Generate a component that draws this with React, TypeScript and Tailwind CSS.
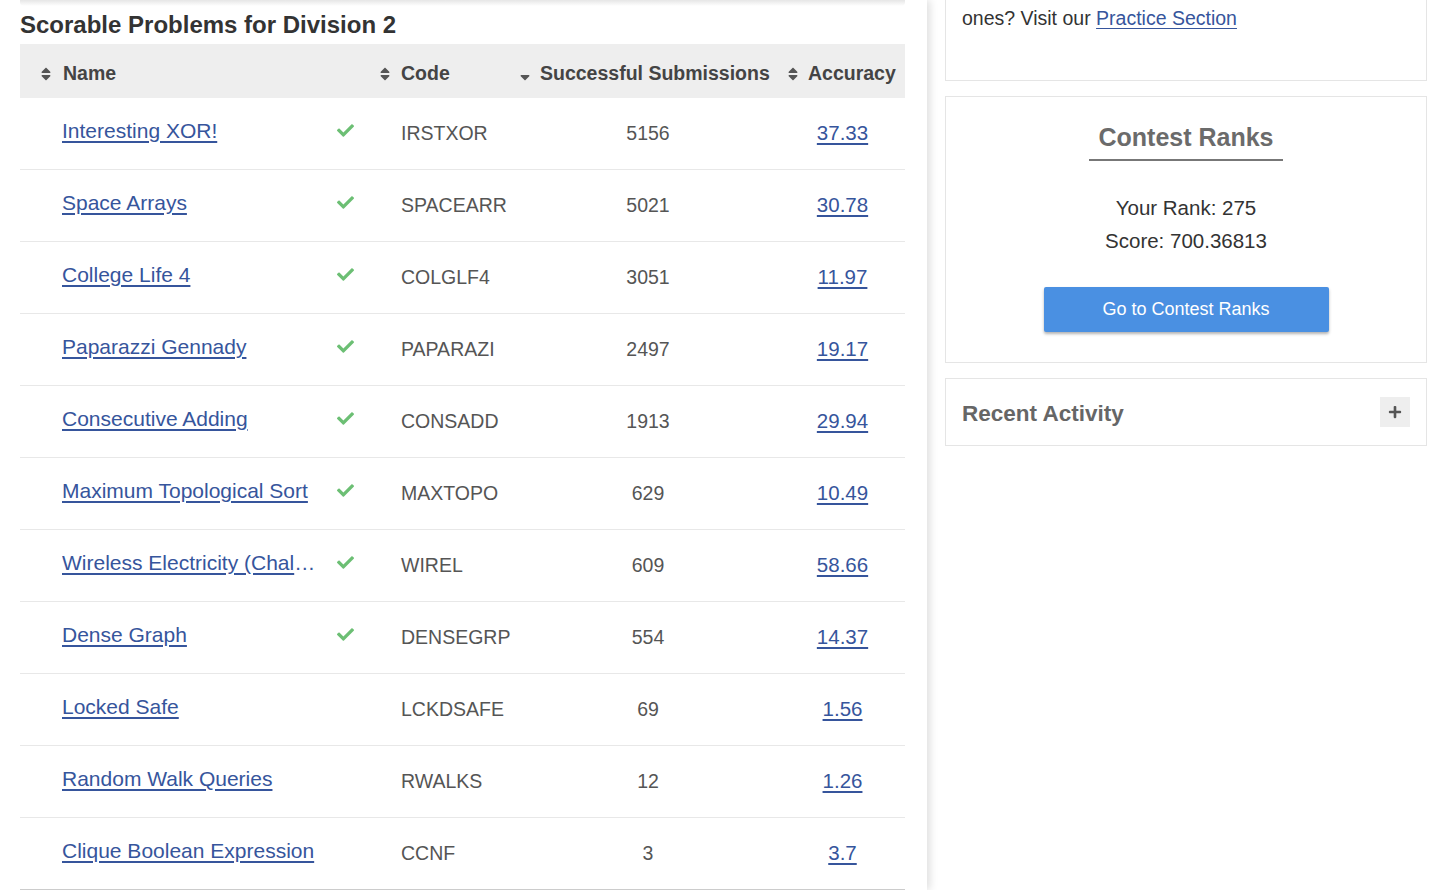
import { FaCheck, FaSort, FaSortDown, FaPlus } from 'react-icons/fa';

const problems = [
  { name: 'Interesting XOR!', code: 'IRSTXOR', subs: '5156', acc: '37.33', solved: true },
  { name: 'Space Arrays', code: 'SPACEARR', subs: '5021', acc: '30.78', solved: true },
  { name: 'College Life 4', code: 'COLGLF4', subs: '3051', acc: '11.97', solved: true },
  { name: 'Paparazzi Gennady', code: 'PAPARAZI', subs: '2497', acc: '19.17', solved: true },
  { name: 'Consecutive Adding', code: 'CONSADD', subs: '1913', acc: '29.94', solved: true },
  { name: 'Maximum Topological Sort', code: 'MAXTOPO', subs: '629', acc: '10.49', solved: true },
  { name: 'Wireless Electricity (Challenge)', code: 'WIREL', subs: '609', acc: '58.66', solved: true },
  { name: 'Dense Graph', code: 'DENSEGRP', subs: '554', acc: '14.37', solved: true },
  { name: 'Locked Safe', code: 'LCKDSAFE', subs: '69', acc: '1.56', solved: false },
  { name: 'Random Walk Queries', code: 'RWALKS', subs: '12', acc: '1.26', solved: false },
  { name: 'Clique Boolean Expression', code: 'CCNF', subs: '3', acc: '3.7', solved: false },
];

export default function App() {
  return (
    <div className="w-[1436px] h-[890px] overflow-hidden bg-white flex font-['Liberation_Sans',Arial,sans-serif] text-[#333]">
      {/* Problems panel */}
      <div className="w-[927px] shrink-0 h-full pl-5 pr-[22px] bg-white shadow-[3px_0_8px_rgba(0,0,0,0.13)] relative z-10">
        <div className="h-[6px] bg-gradient-to-b from-[#e6e6e6] to-white rounded-b-sm" />
        <h2 className="text-[24px] font-bold leading-[38px] text-[#333] -mt-[4px] pt-[4px] pb-0">
          Scorable Problems for Division 2
        </h2>

        <div className="flex items-center h-[54px] pt-[5px] bg-[#eeeeee] text-[19.5px] font-bold text-[#444]">
          <div className="w-[356px] flex items-center pl-[18px] gap-[9px]">
            <FaSort size={16} className="text-[#555]" />
            <span>Name</span>
          </div>
          <div className="w-[141px] flex items-center pl-[1px] gap-[8px]">
            <FaSort size={16} className="text-[#555]" />
            <span>Code</span>
          </div>
          <div className="w-[268px] flex items-center gap-[7px]">
            <FaSortDown size={16} className="text-[#555]" />
            <span>Successful Submissions</span>
          </div>
          <div className="flex-1 flex items-center gap-[7px]">
            <FaSort size={16} className="text-[#555]" />
            <span>Accuracy</span>
          </div>
        </div>

        {problems.map((p, i) => (
          <div
            key={p.code}
            className={`flex items-center h-[72px] border-b ${i === problems.length - 1 ? 'border-[#cccccc]' : 'border-[#e8e8e8]'}`}
          >
            <div className="w-[297px] pl-[42px]">
              <a href="#" className="block truncate text-[21px] text-[#36559c] underline underline-offset-[3px] -mt-[6px]">
                {p.name}
              </a>
            </div>
            <div className="w-[61px] pl-[20px] -mt-[6px]">
              {p.solved && <FaCheck size={17} className="text-[#6cbf74]" />}
            </div>
            <div className="w-[142px] pl-[23px] text-[19.5px] text-[#555]">{p.code}</div>
            <div className="w-[256px] text-center text-[19.5px] text-[#555]">{p.subs}</div>
            <div className="flex-1 text-center pl-[4px]">
              <a href="#" className="text-[20.5px] text-[#36559c] underline underline-offset-[3px]">{p.acc}</a>
            </div>
          </div>
        ))}
      </div>

      {/* Sidebar */}
      <div className="w-[482px] ml-[18px] flex flex-col gap-[15px]">
        <div className="border border-t-0 border-[#e5e5e5] pl-[16px] pt-[5px] h-[81px]">
          <p className="text-[19.5px] leading-[26px] text-[#333]">
            ones? Visit our{' '}
            <a href="#" className="text-[#36559c] underline underline-offset-[3px]">Practice Section</a>
          </p>
        </div>

        <div className="border border-[#e5e5e5] h-[267px] flex flex-col items-center pt-[25px]">
          <h3 className="text-[25px] font-bold text-[#6b6b6b] leading-[30px] px-[9px] pb-[7px] border-b-2 border-[#777]">
            Contest Ranks
          </h3>
          <div className="mt-[30px] text-[20.5px] leading-[33px] text-[#333] text-center">
            <div>Your Rank: 275</div>
            <div>Score: 700.36813</div>
          </div>
          <button className="mt-[30px] w-[285px] h-[45px] rounded-[2px] bg-[#4a90e2] text-white text-[18px] shadow-[0_2px_3px_rgba(0,0,0,0.3)]">
            Go to Contest Ranks
          </button>
        </div>

        <div className="border border-[#e5e5e5] h-[68px] flex items-center justify-between pl-[16px] pr-[16px]">
          <h3 className="text-[22.5px] font-bold text-[#666] pt-[3px]">Recent Activity</h3>
          <div className="w-[30px] h-[30px] bg-[#eeeeee] flex items-center justify-center">
            <FaPlus size={14} className="text-[#555]" />
          </div>
        </div>
      </div>
    </div>
  );
}
